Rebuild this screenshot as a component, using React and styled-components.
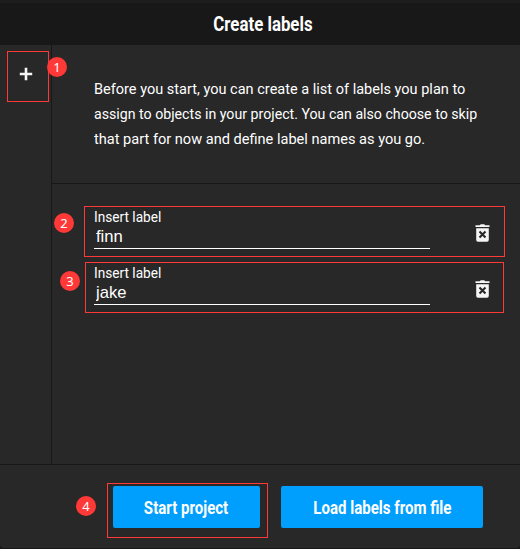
import React from "react";
import styled, { createGlobalStyle } from "styled-components";

const GlobalStyle = createGlobalStyle`
  * { box-sizing: border-box; }
  body { margin: 0; background: #181818; }
`;

const Dialog = styled.main`
  position: relative;
  display: flex;
  flex-direction: column;
  width: 520px;
  height: 548px;
  overflow: hidden;
  background: #282828;
  border-radius: 0 0 4px 4px;
  color: #fff;
  font-family: Roboto, "Liberation Sans", sans-serif;
`;

const Header = styled.header`
  display: flex;
  justify-content: center;
  flex: 0 0 45px;
  padding: 12px 0 0 5px;
  border-top: 3px solid #1d1d1d;
  background: #181818;
`;

const Content = styled.div`
  display: flex;
  flex: 0 0 419px;
`;

const Sidebar = styled.aside`
  flex: 0 0 52px;
  padding: 22px 0 0 19px;
  border-right: 1px solid #181818;
`;

const AddButton = styled.button`
  display: block;
  padding: 0;
  border: 0;
  background: none;
  color: #f5f5f5;
  line-height: 0;
`;

const Main = styled.section`
  flex: 1;
`;

const Intro = styled.div`
  height: 139px;
  padding: 32px 0 0 42px;
  border-bottom: 1px solid #181818;
`;

const Line = styled.div`
  height: 25px;
`;

const Condensed = styled.span`
  display: inline-block;
  align-self: ${(p) => (p.$origin ? "auto" : "flex-start")};
  white-space: nowrap;
  font-size: ${(p) => p.$size}px;
  font-weight: ${(p) => p.$weight || 400};
  line-height: ${(p) => p.$height || 25}px;
  transform: scaleX(${(p) => p.$scale});
  transform-origin: ${(p) => p.$origin || "left"} center;
`;

const Labels = styled.div`
  padding: 24px 30px 0 42px;
`;

const LabelRow = styled.div`
  display: flex;
  justify-content: space-between;
  height: 56px;
`;

const Field = styled.label`
  display: flex;
  flex-direction: column;
  width: 336px;
  height: 41px;
  border-bottom: 1px solid #fff;
`;

const Value = styled.input`
  width: 336px;
  height: 22px;
  padding: 0 2px;
  border: 0;
  outline: 0;
  background: none;
  color: #fff;
  font: 16.6px/18px "Liberation Sans", Arial, sans-serif;
`;

const DeleteButton = styled(AddButton)`
  align-self: flex-start;
  margin-top: 16px;
`;

const Footer = styled.footer`
  display: flex;
  gap: 21px;
  flex: 1;
  padding: 21px 0 0 113px;
  border-top: 1px solid #181818;
`;

const Action = styled.button`
  display: flex;
  align-items: center;
  justify-content: center;
  width: ${(p) => p.$width}px;
  height: 42px;
  padding: 2px 0 0;
  border: 0;
  border-radius: 2px;
  background: #009efd;
  color: #fff;
  font-family: inherit;
`;

const Outline = styled.div`
  position: absolute;
  left: ${(p) => p.$x}px;
  top: ${(p) => p.$y}px;
  width: ${(p) => p.$w}px;
  height: ${(p) => p.$h}px;
  border: 1px solid #ff3838;
  pointer-events: none;
`;

const Marker = styled.div`
  position: absolute;
  left: ${(p) => p.$x}px;
  top: ${(p) => p.$y}px;
  width: 20px;
  height: 20px;
  border-radius: 50%;
  background: #ff3838;
  font: 13px/20px "Noto Sans", sans-serif;
  text-align: center;
`;

const intro = [
  ["Before you start, you can create a list of labels you plan to", 0.937],
  ["assign to objects in your project. You can also choose to skip", 0.914],
  ["that part for now and define label names as you go.", 0.94],
];

const outlines = [
  [7, 51, 42, 51],
  [84, 206, 421, 51],
  [85, 262, 419, 51],
  [107, 483, 161, 55],
];

const markers = [
  [47, 57],
  [54, 213],
  [60, 271],
  [76, 496],
];

function TrashIcon() {
  return (
    <svg width="15" height="18" viewBox="0 0 15 18">
      <path d="M0.5 1.2H4.8L5.8 0.2H9.2L10.2 1.2H14.5V3H0.5Z" fill="#f5f5f5" />
      <path d="M1.2 4.2H13.8V15.8Q13.8 17.7 12 17.7H3Q1.2 17.7 1.2 15.8Z" fill="#f5f5f5" />
      <path d="M4.5 7.4L10.5 13.4M10.5 7.4L4.5 13.4" stroke="#282828" strokeWidth="2.1" />
    </svg>
  );
}

export default function App() {
  return (
    <>
      <GlobalStyle />
      <Dialog>
        <Header>
          <Condensed $size={20} $weight={700} $height={18} $scale={0.842} $origin="center">Create labels</Condensed>
        </Header>
        <Content>
          <Sidebar>
            <AddButton aria-label="Add label">
              <svg width="14" height="14" viewBox="0 0 14 14">
                <path d="M7 0.8V13.2M0.8 7H13.2" stroke="currentColor" strokeWidth="2.6" />
              </svg>
            </AddButton>
          </Sidebar>
          <Main>
            <Intro>
              {intro.map(([text, scale]) => (
                <Line key={text}>
                  <Condensed $size={15.5} $scale={scale}>{text}</Condensed>
                </Line>
              ))}
            </Intro>
            <Labels>
              {["finn", "jake"].map((name) => (
                <LabelRow key={name}>
                  <Field>
                    <Condensed $size={15.5} $height={18} $scale={0.88}>Insert label</Condensed>
                    <Value defaultValue={name} />
                  </Field>
                  <DeleteButton aria-label="Delete label"><TrashIcon /></DeleteButton>
                </LabelRow>
              ))}
            </Labels>
          </Main>
        </Content>
        <Footer>
          <Action $width={147}>
            <Condensed $size={17.5} $weight={700} $scale={0.86} $origin="center">Start project</Condensed>
          </Action>
          <Action $width={202}>
            <Condensed $size={17.5} $weight={700} $scale={0.86} $origin="center">Load labels from file</Condensed>
          </Action>
        </Footer>
        {outlines.map(([x, y, w, h]) => <Outline key={y} $x={x} $y={y} $w={w} $h={h} />)}
        {markers.map(([x, y], i) => <Marker key={y} $x={x} $y={y}>{i + 1}</Marker>)}
      </Dialog>
    </>
  );
}
